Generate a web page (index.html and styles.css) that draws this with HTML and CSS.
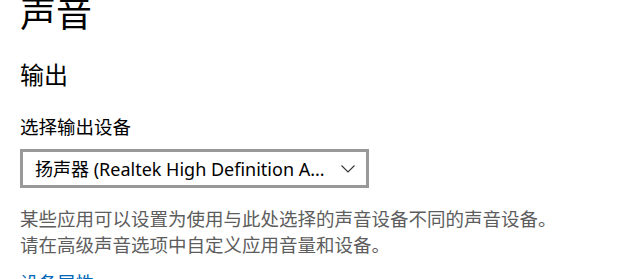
FILE: index.html
```html
<!DOCTYPE html>
<html lang="zh-CN">
<head>
<meta charset="utf-8">
<link rel="stylesheet" href="styles.css">
</head>
<body>
<main class="page">
  <h1 class="title">声音</h1>
  <h2 class="section">输出</h2>
  <div class="label">选择输出设备</div>
  <div class="select">
    <span class="select-text">扬声器 (Realtek High Definition A...</span>
    <svg class="chevron" width="14" height="8" viewBox="0 0 14 8"><path d="M0.5 0.5 L7 7 L13.5 0.5" fill="none" stroke="#333" stroke-width="1.1"/></svg>
  </div>
  <p class="desc">某些应用可以设置为使用与此处选择的声音设备不同的声音设备。<br>请在高级声音选项中自定义应用音量和设备。</p>
  <a class="link" href="#">设备属性</a>
</main>
</body>
</html>
```
FILE: styles.css
```css
html, body { margin: 0; padding: 0; background: #fff; }
body { font-family: "Noto Sans", "Noto Sans CJK SC", sans-serif; color: #000; overflow: hidden; }
.page { padding-left: 20px; display: flex; flex-direction: column; align-items: flex-start; margin-top: -13px; }
.title { font-family: "Noto Sans CJK SC", sans-serif; font-weight: 400; font-size: 36px; line-height: 48px; margin: 0; }
.section { font-family: "Noto Sans CJK SC", sans-serif; font-weight: 400; font-size: 24px; line-height: 32px; margin: 23px 0 0 0; }
.label { font-family: "Noto Sans CJK SC", sans-serif; font-size: 18.5px; line-height: 26px; margin-top: 23px; }
.select { box-sizing: border-box; width: 349px; height: 39px; border: 3px solid #999; margin-top: 10px; display: flex; align-items: center; justify-content: space-between; padding: 0 11px 0 12px; }
.select-text { font-size: 18px; line-height: 24px; white-space: nowrap; }
.chevron { display: block; }
.desc { font-family: "Noto Sans CJK SC", sans-serif; font-size: 18.5px; line-height: 26px; color: #5d5d5d; margin: 17px 0 0 0; }
.link { font-family: "Noto Sans CJK SC", sans-serif; font-size: 18.5px; line-height: 26px; color: #0067b8; text-decoration: none; margin-top: 12px; }
```
